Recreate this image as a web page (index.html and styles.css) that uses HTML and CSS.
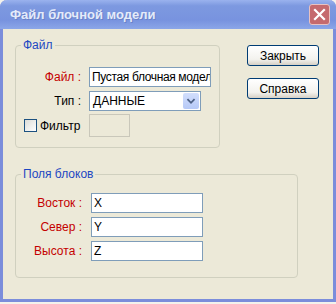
FILE: index.html
```html
<!DOCTYPE html>
<html lang="ru">
<head>
    <meta charset="UTF-8">
    <title>Файл блочной модели</title>
    <link rel="stylesheet" href="styles.css">
</head>
<body>
    <div class="window">
        <div class="titlebar">
            <span class="title">Файл блочной модели</span>
            <span class="close-btn">
                <svg width="21" height="21" viewBox="0 0 21 21">
                    <path d="M6 6 L15 15 M15 6 L6 15" stroke="#fff" stroke-width="2.2" stroke-linecap="square"/>
                </svg>
            </span>
        </div>
        <div class="client">
            <div class="top-row">
                <div class="group group-file">
                    <span class="legend">Файл</span>
                    <div class="row">
                        <span class="lbl red">Файл :</span>
                        <div class="field field-name">Пустая блочная модел</div>
                    </div>
                    <div class="row">
                        <span class="lbl">Тип :</span>
                        <div class="combo">
                            <span class="combo-text">ДАННЫЕ</span>
                            <span class="combo-btn">
                                <svg width="16" height="18" viewBox="0 0 16 18">
                                    <path d="M4 7 L8 11 L12 7" fill="none" stroke="#4d6185" stroke-width="2"/>
                                </svg>
                            </span>
                        </div>
                    </div>
                    <div class="row row-filter">
                        <span class="check-wrap"><span class="check"></span>Фильтр</span>
                        <div class="field field-off"></div>
                    </div>
                </div>
                <div class="buttons">
                    <button>Закрыть</button>
                    <button>Справка</button>
                </div>
            </div>
            <div class="group group-fields">
                <span class="legend">Поля блоков</span>
                <div class="row">
                    <span class="lbl red">Восток :</span>
                    <div class="field field-xyz">X</div>
                </div>
                <div class="row">
                    <span class="lbl red">Север :</span>
                    <div class="field field-xyz">Y</div>
                </div>
                <div class="row">
                    <span class="lbl red">Высота :</span>
                    <div class="field field-xyz">Z</div>
                </div>
            </div>
        </div>
    </div>
</body>
</html>
```

FILE: styles.css
```css
body {
    margin: 0;
    background: #f3f2ec;
    font-family: "Liberation Sans", Arial, sans-serif;
    font-size: 12px;
    color: #000;
}
.window {
    width: 330px;
    height: 299px;
    border: 3px solid #7b8ddb;
    border-top: none;
    border-radius: 7px 7px 0 0;
    background: #ece9d8;
}
.titlebar {
    height: 29px;
    margin: 0 -3px;
    border-radius: 7px 7px 0 0;
    background: linear-gradient(#9ab2ee, #7d99e0 20%, #7893df 70%, #8ba6e8);
    display: flex;
    align-items: center;
    justify-content: space-between;
    padding: 0 6px 0 10px;
}
.title {
    color: #e4ebfa;
    font-weight: bold;
    font-size: 13px;
    text-shadow: 1px 1px 0 #6a82c8;
}
.close-btn {
    width: 21px;
    height: 21px;
    border: 1px solid #e8c2c2;
    border-radius: 3px;
    background: #c56a6e;
    box-sizing: border-box;
    display: flex;
    align-items: center;
    justify-content: center;
}
.close-btn svg {
    flex: none;
}
.client {
    padding: 16px 0 0 12px;
}
.top-row {
    display: flex;
    gap: 27px;
}
.group {
    position: relative;
    border: 1px solid #d0d0bf;
    border-radius: 4px;
    box-sizing: border-box;
    display: flex;
    flex-direction: column;
    gap: 4px;
}
.legend {
    position: absolute;
    top: -8px;
    left: 5px;
    padding: 0 2px;
    background: #ece9d8;
    color: #1d47c2;
    line-height: 14px;
}
.group-file {
    width: 205px;
    height: 103px;
    padding-top: 21px;
}
.group-fields {
    width: 283px;
    height: 104px;
    margin-top: 26px;
    padding-top: 18px;
}
.row {
    display: flex;
    align-items: center;
    gap: 8px;
}
.lbl {
    width: 65px;
    text-align: right;
}
.group-fields .lbl {
    width: 66px;
}
.group-fields .row {
    gap: 9px;
}
.red {
    color: #c40000;
}
.field {
    height: 20px;
    box-sizing: border-box;
    border: 1px solid #7f9db9;
    background: #fff;
    padding: 0 2px;
    line-height: 18px;
    white-space: nowrap;
    overflow: hidden;
}
.field-name {
    width: 122px;
    letter-spacing: -0.35px;
}
.field-xyz {
    width: 112px;
}
.field-off {
    width: 41px;
    height: 23px;
    border-color: #c9c7ba;
    background: #ece9d8;
}
.combo {
    width: 112px;
    height: 20px;
    box-sizing: border-box;
    border: 1px solid #7f9db9;
    background: #fff;
    display: flex;
    align-items: center;
    justify-content: space-between;
    padding: 0 1px 0 3px;
}
.combo-btn {
    width: 16px;
    height: 16px;
    border-radius: 2px;
    background: linear-gradient(#d2defc, #b6c9f7);
    display: flex;
    align-items: center;
    justify-content: center;
}
.combo-btn svg {
    width: 16px;
    height: 16px;
}
.row-filter {
    margin-top: -1px;
}
.check-wrap {
    width: 65px;
    display: flex;
    align-items: center;
    gap: 3px;
    padding-left: 8px;
    box-sizing: border-box;
}
.check {
    width: 13px;
    height: 13px;
    box-sizing: border-box;
    border: 1px solid #1c5180;
    background: linear-gradient(135deg, #dcdcd7, #fff);
}
.buttons {
    display: flex;
    flex-direction: column;
    gap: 12px;
}
button {
    width: 72px;
    height: 21px;
    border: 1px solid #003c74;
    border-radius: 3px;
    background: linear-gradient(#fff, #f3f2ee 70%, #d6d0c5);
    font-family: "Liberation Sans", Arial, sans-serif;
    font-size: 12px;
    color: #000;
    padding: 0;
}
```
